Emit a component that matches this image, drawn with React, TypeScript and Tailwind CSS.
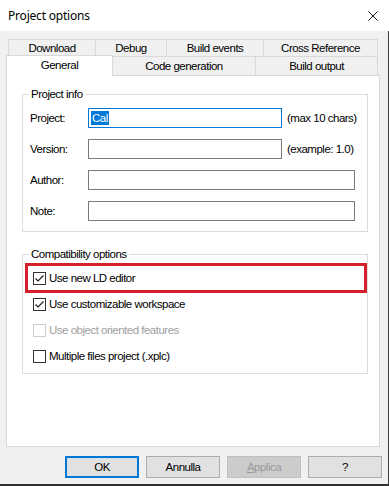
import React from "react";

const rowOne = [
  { label: "Download", w: "w-[87px]" },
  { label: "Debug", w: "w-[71px]" },
  { label: "Build events", w: "w-[97px]" },
  { label: "Cross Reference", w: "w-[115px]" },
];

function Check({ checked, disabled }: { checked?: boolean; disabled?: boolean }) {
  const edge = disabled ? "#cccccc" : "#333333";
  return (
    <svg width="13" height="13" viewBox="0 0 13 13" className="shrink-0">
      <rect x="0.5" y="0.5" width="12" height="12" fill="#ffffff" stroke={edge} />
      {checked && (
        <path d="M2.5 6.5 L5 9 L10.5 3.5" fill="none" stroke="#202020" strokeWidth="1.2" />
      )}
    </svg>
  );
}

function Field({ label, width, children, note }: { label: string; width: string; children?: React.ReactNode; note?: string }) {
  return (
    <div className="flex items-center h-[20px] pl-[7px]">
      <span className="w-[58px] shrink-0">{label}</span>
      <div className={`${width} h-[20px] bg-white border ${children ? "border-[#0078d7]" : "border-[#7a7a7a]"} flex items-center pl-[2px]`}>
        {children}
      </div>
      {note && <span className="ml-[5px] whitespace-nowrap">{note}</span>}
    </div>
  );
}

function Option({ label, checked, disabled }: { label: string; checked?: boolean; disabled?: boolean }) {
  return (
    <div className="flex items-center h-[26px] pl-[10px] gap-[3px]">
      <Check checked={checked} disabled={disabled} />
      <span className={disabled ? "text-[#a0a0a0]" : ""}>{label}</span>
    </div>
  );
}

export default function App() {
  return (
    <div className="w-[389px] h-[486px] flex flex-col bg-[#f0f0f0] text-black text-[11.5px] leading-[13px] tracking-[-0.5px] font-['Liberation_Sans',Arial,sans-serif]">
      {/* Title bar */}
      <div className="h-[31px] shrink-0 bg-white flex items-center justify-between pl-[8px] pr-[11px]">
        <span className="text-[12px] tracking-[-0.2px] font-['Noto_Sans',sans-serif]">Project options</span>
        <svg width="10" height="10" viewBox="0 0 10 10">
          <path d="M0.5 0.5 L9.5 9.5 M9.5 0.5 L0.5 9.5" stroke="#111" strokeWidth="1" />
        </svg>
      </div>

      <div className="flex-1 flex flex-col border-r border-r-[#3c3c3c] border-b-2 border-b-[#2f2f2f]">
        {/* Tabs */}
        <div className="mt-[8px] px-[6px]">
          <div className="ml-[2px] flex h-[17px]">
            {rowOne.map((t, i) => (
              <div
                key={t.label}
                className={`${t.w} flex items-center justify-center border-t border-l border-[#d9d9d9] ${i === rowOne.length - 1 ? "border-r" : ""}`}
              >
                {t.label}
              </div>
            ))}
          </div>
          <div className="-mt-px flex items-start h-[20px]">
            <div className="relative z-10 w-[107px] h-[21px] bg-white border-t border-l border-r border-[#d9d9d9] flex items-start justify-center pt-[3px]">
              General
            </div>
            <div className="mt-px w-[143px] h-[19px] border-t border-r border-[#d9d9d9] flex items-center justify-center">
              Code generation
            </div>
            <div className="mt-px w-[122px] h-[19px] border-t border-r border-[#d9d9d9] flex items-center justify-center">
              Build output
            </div>
          </div>
        </div>

        {/* Panel */}
        <div className="mx-[6px] w-[374px] h-[372px] bg-white border border-[#d9d9d9] pt-[12px] pl-[15px]">
          <fieldset className="w-[346px] border border-[#dcdcdc] pt-[7px] pb-[10px] flex flex-col gap-[11px]">
            <legend className="ml-[6px] px-[2px] leading-[13px]">Project info</legend>
            <Field label="Project:" width="w-[194px]" note="(max 10 chars)">
              <span className="bg-[#0078d7] text-white leading-[14px] px-px">Cal</span>
            </Field>
            <Field label="Version:" width="w-[194px]" note=" (example: 1.0)" />
            <Field label="Author:" width="w-[267px]" />
            <Field label="Note:" width="w-[267px]" />
          </fieldset>

          <fieldset className="mt-[16px] w-[346px] border border-[#dcdcdc] pt-[4px] pb-[4px]">
            <legend className="ml-[6px] px-[2px] leading-[13px]">Compatibility options</legend>
            <div className="relative">
              <Option label="Use new LD editor" checked />
              <div className="absolute left-[2px] right-0 -top-[2px] -bottom-[2px] border-[3px] border-[#d3222c]" />
            </div>
            <Option label="Use customizable workspace" checked />
            <Option label="Use object oriented features" disabled />
            <Option label="Multiple files project (.xplc)" />
          </fieldset>
        </div>

        {/* Buttons */}
        <div className="mt-[9px] pl-[65px] flex gap-[7px]">
          <button className="w-[74px] h-[22px] bg-[#e1e1e1] border-2 border-[#0078d7]">OK</button>
          <button className="w-[74px] h-[22px] bg-[#e1e1e1] border border-[#adadad]">Annulla</button>
          <button className="w-[74px] h-[22px] bg-[#cccccc] border border-[#bfbfbf] text-[#9a9a9a]">
            <span className="underline">A</span>pplica
          </button>
          <button className="w-[74px] h-[22px] bg-[#e1e1e1] border border-[#adadad]">?</button>
        </div>
      </div>
    </div>
  );
}
